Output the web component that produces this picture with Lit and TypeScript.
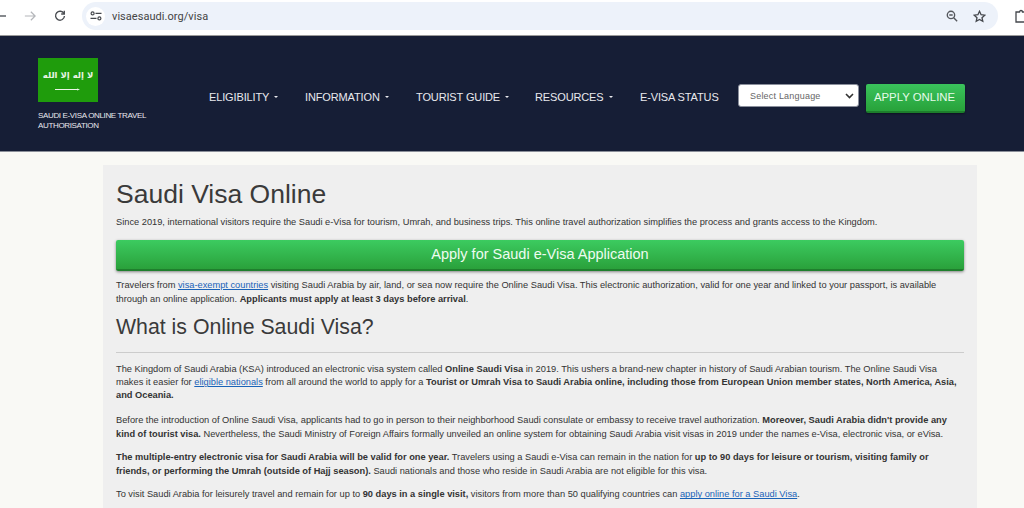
import { LitElement, html, css } from "lit";
import { customElement } from "lit/decorators.js";

@customElement("app-root")
export class AppRoot extends LitElement {
  static styles = css`
    :host { display: block; width: 1024px; height: 508px; overflow: hidden; background: #f9f9f5; font-family: "Liberation Sans", Arial, sans-serif; color: #333; }
    .toolbar { height: 35px; background: #fff; border-bottom: 1px solid #9a9a9a; display: flex; align-items: center; box-sizing: content-box; }
    .tb-inner { height: 32px; margin-bottom: 3px; display: flex; align-items: center; width: 100%; }
    .nav-ic { flex: none; display: block; }
    .back { margin-left: -8px; }
    .fwd { margin-left: 16px; }
    .reload { margin-left: 18px; }
    .omni { margin-left: 16px; width: 916px; height: 28px; background: #edf2fa; border-radius: 14px; display: flex; align-items: center; flex: none; }
    .tune { width: 19px; height: 19px; margin-left: 4px; border-radius: 50%; background: #fff; display: flex; align-items: center; justify-content: center; flex: none; }
    .url { margin-left: 7px; font: 11px "Roboto", "Liberation Sans", sans-serif; color: #444; flex: 1; letter-spacing: 0.05px; }
    .zoom-ic { margin-right: 15px; }
    .star-ic { margin-right: 12px; }
    .ext-ic { margin-left: 17px; flex: none; }
    header { height: 116px; background: #161e36; border-bottom: 1px solid #8b8f99; display: flex; box-sizing: border-box; }
    .brand { width: 171px; margin-left: 38px; padding-top: 22px; flex: none; }
    .flag { width: 60px; height: 44px; background: #1f9c0c; display: flex; flex-direction: column; align-items: center; overflow: hidden; }
    .shahada { font: 700 8.5px/11px "DejaVu Sans", sans-serif; color: #e8f3e4; margin-top: 12px; white-space: nowrap; height: 11px; }
    .sword { display: block; margin-top: 7px; }
    .tag { margin: 9px 0 0; font-size: 8px; line-height: 10px; color: #e8e8ee; letter-spacing: -0.35px; width: 125px; }
    nav { display: flex; align-items: center; flex: none; height: 100%; padding-top: 6px; box-sizing: border-box; }
    .item { font-size: 11px; color: #e9e9ee; white-space: nowrap; display: flex; align-items: center; letter-spacing: -0.13px; }
    .item i { display: block; width: 0; height: 0; margin-left: 5px; border: 2.5px solid transparent; border-top-color: #e9e9ee; border-bottom: 0; }
    .i1 { width: 96px; } .i2 { width: 111px; } .i3 { width: 119px; } .i4 { width: 105px; } .i5 { width: 98px; }
    .sel { width: 121px; height: 23px; background: #fff; border-radius: 3px; border: 1px solid #8a8f9c; box-sizing: border-box; display: flex; align-items: center; justify-content: space-between; padding: 1px 4px 0 11px; font-size: 9px; letter-spacing: 0.2px; color: #666; flex: none; margin-bottom: 3px; }
    .apply { width: 99px; height: 29px; margin: 3px 0 0 7px; padding-right: 2px; box-sizing: border-box; background: linear-gradient(#3ac35c, #28a23a); border-bottom: 2px solid #1d7e2c; border-radius: 2px; color: #e6fbe9; font-size: 11.4px; display: flex; align-items: center; justify-content: center; flex: none; box-shadow: 0 1px 2px rgba(0,0,0,.4); }
    main { margin: 13px 0 0 103px; width: 874px; height: 400px; background: #efefef; padding: 0 13px; box-sizing: border-box; overflow: hidden; }
    h1 { margin: 0; padding-top: 13px; font-weight: 400; font-size: 26.5px; line-height: 32px; color: #3a3a3a; }
    p { margin: 0; font-size: 9.28px; line-height: 13.3px; color: #333; }
    .p0 { margin-top: 6px; }
    .cta { margin-top: 11px; height: 31px; padding-bottom: 1px; box-sizing: border-box; background: linear-gradient(#3ccb60, #2aa13b); border-bottom: 2px solid #1f7f2d; border-radius: 2px; box-shadow: 0 1px 3px rgba(0,0,0,.45); color: #eefcf0; font-size: 14.5px; display: flex; align-items: center; justify-content: center; }
    .p1 { margin-top: 8px; }
    h2 { margin: 8px 0 0; font-weight: 400; font-size: 21.3px; line-height: 27px; color: #3a3a3a; }
    hr { margin: 11px 0 0; border: 0; border-top: 1px solid #ccc; }
    .p2 { margin-top: 10px; } .p3 { margin-top: 11.5px; } .p4, .p5 { margin-top: 10.5px; }
    a { color: #1a63b8; text-decoration: underline; }
    b { font-weight: 700; }
  `;

  render() {
    return html`
      <div class="toolbar"><div class="tb-inner">
        <svg class="nav-ic back" width="16" height="16" viewBox="0 0 16 16" fill="none" stroke="#5f6368" stroke-width="1.4"><path d="M14 8H2M7 3 2 8l5 5"/></svg>
        <svg class="nav-ic fwd" width="12" height="12" viewBox="0 0 14 14" fill="none" stroke="#b4b6ba" stroke-width="1.4"><path d="M1 7h12M8 2l5 5-5 5"/></svg>
        <svg class="nav-ic reload" width="12" height="12" viewBox="0 0 14 14" fill="none" stroke="#4a4d52" stroke-width="1.6"><path d="M11.6 4.2A5.2 5.2 0 1 0 12.2 7"/><path d="M12 1v3.6H8.4" /></svg>
        <div class="omni">
          <div class="tune"><svg width="12" height="10" viewBox="0 0 12 10" fill="none" stroke="#44474c" stroke-width="1.2"><circle cx="2.6" cy="2.4" r="1.5"/><path d="M5.5 2.4H11.5M.5 7.4H6.5"/><circle cx="9.4" cy="7.4" r="1.5"/></svg></div>
          <div class="url">visaesaudi.org/visa</div>
          <svg class="zoom-ic" width="12" height="12" viewBox="0 0 14 14" fill="none" stroke="#55585d" stroke-width="1.6"><circle cx="5.8" cy="5.8" r="4.3"/><path d="M9 9l4 4M3.8 5.8h4"/></svg>
          <svg class="star-ic" width="13" height="13" viewBox="0 0 14 14" fill="none" stroke="#44474c" stroke-width="1.4"><path d="M7 1.4l1.7 3.7 4 .45-3 2.7.85 3.95L7 10.2l-3.55 2 .85-3.95-3-2.7 4-.45z"/></svg>
        </div>
        <svg class="ext-ic" width="14" height="14" viewBox="0 0 14 14" fill="none" stroke="#44474c" stroke-width="1.3"><path d="M1 3h3.5a1.5 1.5 0 0 1 3 0H11v3.5a1.5 1.5 0 0 1 0 3V13H1z"/></svg>
      </div></div>
      <header>
        <div class="brand">
          <div class="flag">
            <div class="shahada" dir="rtl">لا إله إلا الله</div>
            <svg class="sword" width="26" height="3" viewBox="0 0 26 3"><path d="M0 1h22v-.6l3 1.1-3 .9V2H0z" fill="#eef6ea"/></svg>
          </div>
          <p class="tag">SAUDI E-VISA ONLINE TRAVEL AUTHORISATION</p>
        </div>
        <nav>
          <div class="item i1">ELIGIBILITY<i></i></div>
          <div class="item i2">INFORMATION<i></i></div>
          <div class="item i3">TOURIST GUIDE<i></i></div>
          <div class="item i4">RESOURCES<i></i></div>
          <div class="item i5">E-VISA STATUS</div>
          <div class="sel">Select Language<svg width="9" height="6" viewBox="0 0 9 6" fill="none" stroke="#333" stroke-width="1.6"><path d="M1 1l3.5 3.5L8 1"/></svg></div>
          <div class="apply">APPLY ONLINE</div>
        </nav>
      </header>
      <main>
        <h1>Saudi Visa Online</h1>
        <p class="p0">Since 2019, international visitors require the Saudi e-Visa for tourism, Umrah, and business trips. This online travel authorization simplifies the process and grants access to the Kingdom.</p>
        <div class="cta">Apply for Saudi e-Visa Application</div>
        <p class="p1">Travelers from <a>visa-exempt countries</a> visiting Saudi Arabia by air, land, or sea now require the Online Saudi Visa. This electronic authorization, valid for one year and linked to your passport, is available through an online application. <b>Applicants must apply at least 3 days before arrival</b>.</p>
        <h2>What is Online Saudi Visa?</h2>
        <hr />
        <p class="p2">The Kingdom of Saudi Arabia (KSA) introduced an electronic visa system called <b>Online Saudi Visa</b> in 2019. This ushers a brand-new chapter in history of Saudi Arabian tourism. The Online Saudi Visa makes it easier for <a>eligible nationals</a> from all around the world to apply for a <b>Tourist or Umrah Visa to Saudi Arabia online, including those from European Union member states, North America, Asia, and Oceania.</b></p>
        <p class="p3">Before the introduction of Online Saudi Visa, applicants had to go in person to their neighborhood Saudi consulate or embassy to receive travel authorization. <b>Moreover, Saudi Arabia didn't provide any kind of tourist visa.</b> Nevertheless, the Saudi Ministry of Foreign Affairs formally unveiled an online system for obtaining Saudi Arabia visit visas in 2019 under the names e-Visa, electronic visa, or eVisa.</p>
        <p class="p4"><b>The multiple-entry electronic visa for Saudi Arabia will be valid for one year.</b> Travelers using a Saudi e-Visa can remain in the nation for <b>up to 90 days for leisure or tourism, visiting family or friends, or performing the Umrah (outside of Hajj season).</b> Saudi nationals and those who reside in Saudi Arabia are not eligible for this visa.</p>
        <p class="p5">To visit Saudi Arabia for leisurely travel and remain for up to <b>90 days in a single visit,</b> visitors from more than 50 qualifying countries can <a>apply online for a Saudi Visa</a>.</p>
      </main>
    `;
  }
}
